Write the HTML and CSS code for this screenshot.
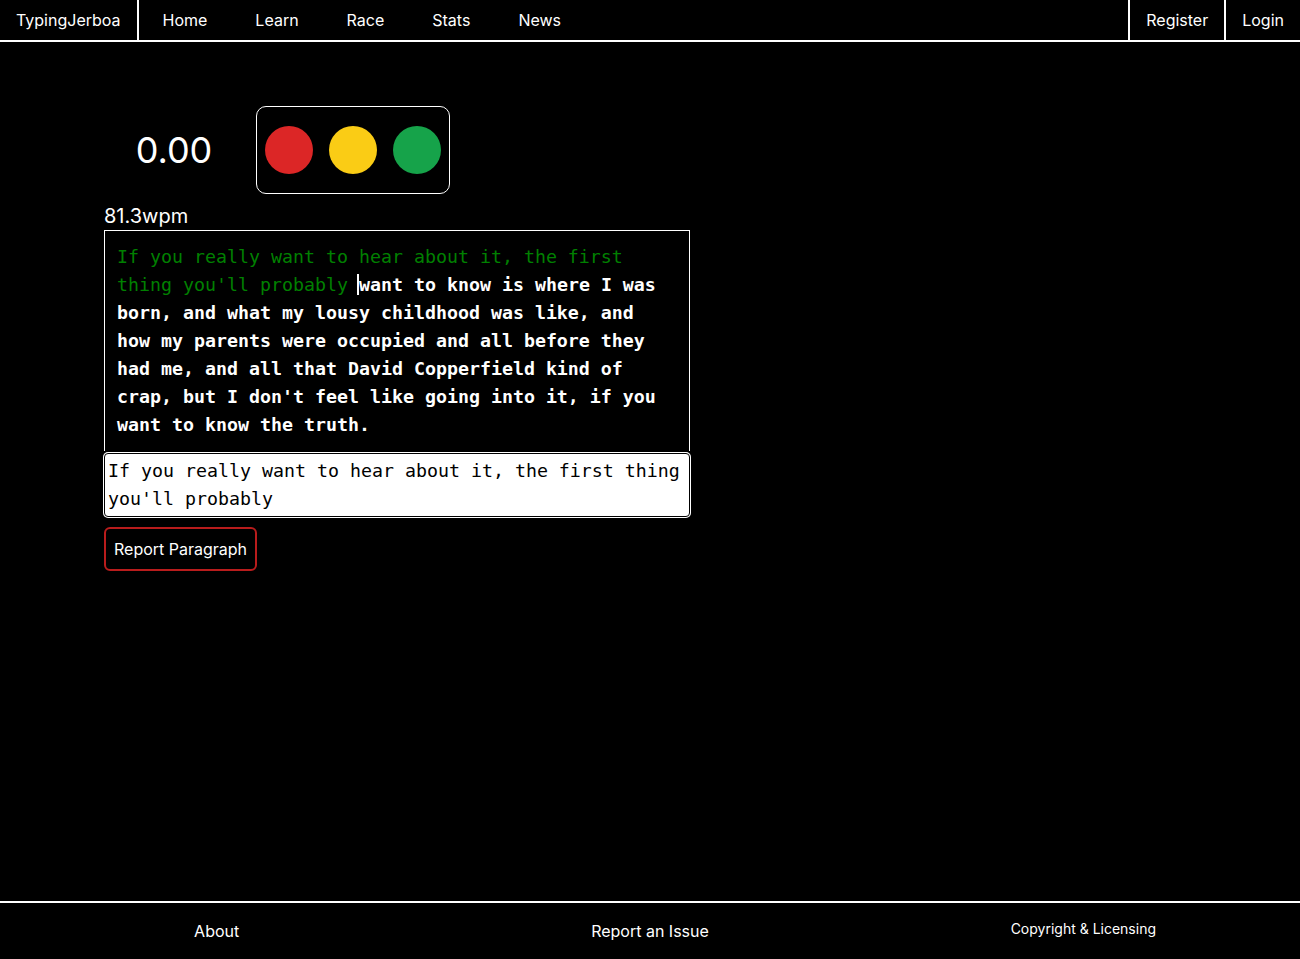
FILE: index.html
```html
<!DOCTYPE html>
<html lang="en">
<head>
<meta charset="utf-8">
<title>TypingJerboa</title>
<link rel="stylesheet" href="styles.css">
</head>
<body>
<nav class="navbar">
  <a class="brand" href="#">TypingJerboa</a>
  <div class="nav-links">
    <a href="#">Home</a>
    <a href="#">Learn</a>
    <a href="#">Race</a>
    <a href="#">Stats</a>
    <a href="#">News</a>
  </div>
  <div class="nav-auth">
    <a href="#">Register</a>
    <a href="#">Login</a>
  </div>
</nav>
<main class="main">
  <div class="race-head">
    <div class="timer">0.00</div>
    <div class="lights">
      <span class="light red"></span>
      <span class="light yellow"></span>
      <span class="light green"></span>
    </div>
  </div>
  <div class="wpm">81.3wpm</div>
  <div class="passage"><span class="done">If you really want to hear about it, the first thing you'll probably </span><span class="cursor">want</span> to know is where I was born, and what my lousy childhood was like, and how my parents were occupied and all before they had me, and all that David Copperfield kind of crap, but I don't feel like going into it, if you want to know the truth.</div>
  <div class="typed-input">If you really want to hear about it, the first thing you'll probably</div>
  <button class="report-btn">Report Paragraph</button>
</main>
<footer class="footer">
  <a href="#">About</a>
  <a href="#">Report an Issue</a>
  <a href="#" class="small">Copyright &amp; Licensing</a>
</footer>
</body>
</html>
```
FILE: styles.css
```css
* { box-sizing: border-box; }
html, body { margin: 0; padding: 0; }
body {
  background: #000;
  color: #fff;
  font-family: Inter, "Noto Sans", sans-serif;
  min-height: 959px;
  display: flex;
  flex-direction: column;
}
a { color: #fff; text-decoration: none; }

.navbar {
  display: flex;
  height: 42px;
  border-bottom: 2px solid #fff;
  font-size: 16px;
}
.brand {
  display: flex;
  align-items: center;
  padding: 0 16px 0 16px;
  border-right: 2px solid #fff;
}
.nav-links { display: flex; flex: 1; }
.nav-links a {
  display: flex;
  align-items: center;
  padding: 0 24px;
}
.nav-auth { display: flex; }
.nav-auth a {
  display: flex;
  align-items: center;
  padding: 0 16px;
  border-left: 2px solid #fff;
}

.main {
  flex: 1;
  padding: 64px 0 0 104px;
  display: flex;
  flex-direction: column;
  align-items: flex-start;
}
.race-head {
  display: flex;
  align-items: center;
  gap: 12px;
}
.timer {
  width: 140px;
  text-align: center;
  font-size: 36px;
  font-weight: 400;
}
.lights {
  display: flex;
  gap: 16px;
  padding: 19px 8px;
  border: 1px solid #fff;
  border-radius: 10px;
}
.light {
  width: 48px;
  height: 48px;
  border-radius: 50%;
}
.red { background: #dc2626; }
.yellow { background: #facc15; }
.green { background: #16a34a; }

.wpm {
  margin-top: 8px;
  font-size: 20px;
  line-height: 28px;
}
.passage {
  width: 586px;
  border: 1px solid #fff;
  border-bottom: none;
  padding: 12px;
  font-family: "DejaVu Sans Mono", "Liberation Mono", monospace;
  font-size: 18.27px;
  line-height: 28px;
  font-weight: 700;
  color: #fff;
}
.done { color: #008000; font-weight: 400; }
.cursor {
  box-shadow: -2px 0 0 #fff;
}
.typed-input {
  width: 586px;
  margin-top: 2px;
  background: #fff;
  color: #000;
  border: 1px solid #000;
  box-shadow: 0 0 0 1px #fff;
  border-radius: 4px;
  padding: 3px;
  font-family: "DejaVu Sans Mono", "Liberation Mono", monospace;
  font-size: 18.27px;
  line-height: 28px;
}
.report-btn {
  margin-top: 10px;
  background: #000;
  color: #fff;
  border: 2px solid #b91c1c;
  border-radius: 6px;
  padding: 10px 8px;
  font-family: Inter, "Noto Sans", sans-serif;
  font-size: 16px;
  line-height: 20px;
}

.footer {
  height: 58px;
  border-top: 2px solid #fff;
  display: grid;
  grid-template-columns: 1fr 1fr 1fr;
  align-items: center;
  justify-items: center;
  font-size: 16px;
}
.footer .small { font-size: 14px; margin-top: -6px; }
```
